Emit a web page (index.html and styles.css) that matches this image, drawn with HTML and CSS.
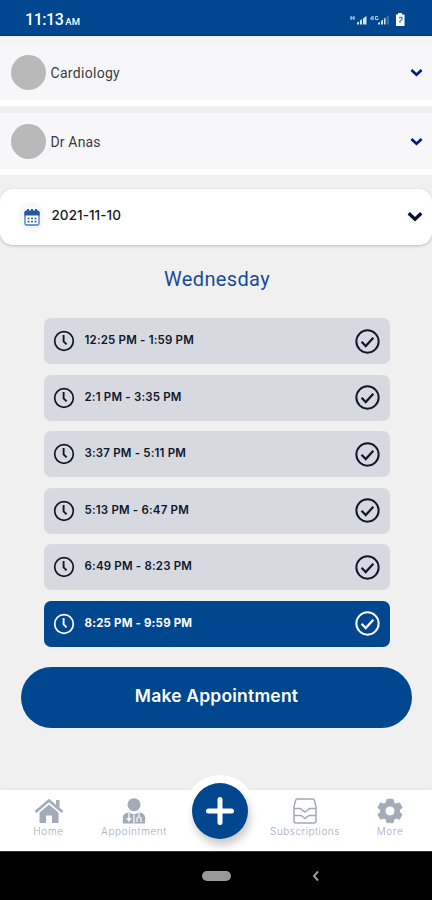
FILE: index.html
```
<!DOCTYPE html>
<html lang="en">
<head>
<meta charset="utf-8">
<title>Make Appointment</title>
<link rel="stylesheet" href="styles.css">
</head>
<body>
<svg class="defs" width="0" height="0">
  <symbol id="clock" viewBox="0 0 22 22"><g fill="none" stroke="currentColor" stroke-width="1.7"><circle cx="11" cy="11" r="9.3"/><path d="M10.6 5v6.4l3 3" stroke-width="1.9"/></g></symbol>
  <symbol id="check" viewBox="0 0 24 24"><g fill="none" stroke="currentColor" stroke-width="1.9"><circle cx="12" cy="12" r="10.700"/><path d="M6.3 12.2l4 4.2 7.3-8" stroke-width="2.1"/></g></symbol>
  <symbol id="down" viewBox="0 0 14 9"><path d="M1.5 1.7L7 6.8l5.500-5.100" fill="none" stroke="currentColor" stroke-width="2.9"/></symbol>
</svg>
<div class="phone">
  <header class="status">
    <div class="time">11:13<small>AM</small></div>
    <svg class="signals" width="56" height="16" viewBox="0 0 56 16" fill="#d5e2f1">
      <path d="M1 4v4M4 4v4M1 6h3" stroke="#d5e2f1" stroke-width="1"/>
      <path d="M7 12.500V10.500l2-1v3zM10 12.500V8.500l2-1.500v5.500zM13 12.500V6.500l3.500-2.500v8.500z"/>
      <path d="M22.500 4l-2 3h3M23 4v4M28 4.500h-2.500v3H28V6" fill="none" stroke="#b8cde5" stroke-width="1"/>
      <path d="M28 12.500V11l2-1v2.500zM31 12.500V9l2-1.500v5zM34 12.500V6.700l1.500-1.200v7z"/>
      <path d="M36.500 12.500V5l2.500-2v9.500z" opacity=".25"/>
      <path d="M46 2.500h2V1h4v1.500h2.500v11.500H46z" fill="#fff"/>
      <path d="M49 5.500h3v2l-2 1.500v2" fill="none" stroke="#527eb5" stroke-width="1.300"/>
    </svg>
  </header>
  <section class="picker first"><i class="avatar"></i><span class="cardio">Cardiology</span><svg class="arrow"><use href="#down"/></svg></section>
  <section class="picker"><i class="avatar"></i><span class="doctor">Dr Anas</span><svg class="arrow"><use href="#down"/></svg></section>
  <section class="date">
    <div class="cal"><svg width="16" height="17" viewBox="0 0 16 17"><rect x="1" y="3" width="14" height="13" rx="1.500" fill="#fff" stroke="#4878b5" stroke-width="1.300"/><path d="M.4 3q0-1.500 1.600-1.500H3V0h2v1.500h2V0h2v1.500h2V0h2v1.500h1q1.600 0 1.600 1.500v3.500H.4z" fill="#24589f"/><path d="M3.500 9.500h9M3.500 12.700h9" stroke="#3566a8" stroke-width="1.700" stroke-dasharray="2 1.500"/></svg></div>
    <span>2021-11-10</span><svg class="arrow"><use href="#down"/></svg>
  </section>
  <h1><span>Wednesday</span></h1>
  <main class="slots">
    <div class="slot"><svg class="clock"><use href="#clock"/></svg><span>12:25 PM - 1:59 PM</span><svg class="check"><use href="#check"/></svg></div>
    <div class="slot"><svg class="clock"><use href="#clock"/></svg><span>2:1 PM - 3:35 PM</span><svg class="check"><use href="#check"/></svg></div>
    <div class="slot"><svg class="clock"><use href="#clock"/></svg><span>3:37 PM - 5:11 PM</span><svg class="check"><use href="#check"/></svg></div>
    <div class="slot"><svg class="clock"><use href="#clock"/></svg><span>5:13 PM - 6:47 PM</span><svg class="check"><use href="#check"/></svg></div>
    <div class="slot"><svg class="clock"><use href="#clock"/></svg><span>6:49 PM - 8:23 PM</span><svg class="check"><use href="#check"/></svg></div>
    <div class="slot active"><svg class="clock"><use href="#clock"/></svg><span>8:25 PM - 9:59 PM</span><svg class="check"><use href="#check"/></svg></div>
  </main>
  <button class="make"><span>Make Appointment</span></button>
  <nav class="tabs">
    <div class="tab home"><svg width="30" height="26" viewBox="0 0 30 26"><path d="M1.500 14L15 2.500 28.500 14" fill="none" stroke="currentColor" stroke-width="2.700"/><path d="M22 2h3.500v8L22 7zM5.500 14.500L15 6.500l9.500 8V25H18v-7.500h-6V25H5.500z" fill="currentColor"/></svg><span>Home</span></div>
    <div class="tab appointment"><svg width="24" height="26" viewBox="0 0 24 26"><circle cx="12" cy="6.700" r="6.500" fill="currentColor"/><path d="M.8 25.500V20q0-5 6-5.500l5.200 2 5.200-2q6 .5 6 5.500v5.500z" fill="currentColor"/><path d="M7 15v3.500M12 17v8.500M17 15v3.500M15 24v-3q0-2 2-2t2 2v3" fill="none" stroke="#fff" stroke-width="1.200"/><path d="M7 18.500v5M4.500 21h5" stroke="#fff" stroke-width="1.700"/></svg><span>Appointment</span></div>
    <div class="tab fab-slot"><div class="halo"><div class="fab"><svg width="28" height="28" viewBox="0 0 28 28"><path d="M14 2.500v23M2.500 14h23" stroke="#fff" stroke-width="5" stroke-linecap="round"/></svg></div></div></div>
    <div class="tab subscriptions"><svg width="24" height="26" viewBox="0 0 24 26" fill="none" stroke="currentColor" stroke-width="1.500"><path d="M1 8.500L2.500 2.500q.4-1.500 2-1.500h15q1.600 0 2 1.500L23 8.500V23q0 2-2 2H3q-2 0-2-2zM1 10.500h6q1 0 1.500 1L12 14l3.500-2.500q.5-1 1.500-1h6M1 17.500h7l4 3 4-3h7"/></svg><span>Subscriptions</span></div>
    <div class="tab more"><svg width="26" height="26" viewBox="0 0 26 26"><path fill="currentColor" stroke="currentColor" stroke-linejoin="round" fill-rule="evenodd" d="M10 1.300h6l.8 3.500 2.200 1.300 3.400-1.300 2.700 4.800-2.800 2.500v1.900l2.800 2.500-2.700 4.800-3.400-1.300-2.200 1.300-.8 3.400h-6l-.8-3.400L7 20l-3.400 1.300-2.700-4.800L3.700 14v-1.900L.9 9.600l2.700-4.800L7 6.100l2.200-1.300zM13 8a5 5 0 1 0 0 10 5 5 0 0 0 0-10z"/></svg><span>More</span></div>
  </nav>
  <footer class="system"><i class="pill"></i><svg width="8" height="12" viewBox="0 0 8 12"><path d="M6 1.500L2 6l4 4.500" fill="none" stroke="#999" stroke-width="2"/></svg></footer>
</div>
</body>
</html>
```
FILE: styles.css
```
* { box-sizing: border-box; }
body { margin: 0; background: #f0f0f0; }
.defs { display: block; }
.phone { width: 432px; height: 900px; display: flex; flex-direction: column; overflow: hidden; background: #f0f0f0; font-family: Inter, sans-serif; }
.phone > * { flex-shrink: 0; }
span { white-space: nowrap; }
.status { height: 36px; background: #004790; border-bottom: 1px solid #003584; color: #fff; display: flex; justify-content: space-between; padding: 10.5px 26px 0 25px; }
.time { display: flex; align-items: baseline; gap: 2px; height: 17px; font: 500 16px/17px Roboto, sans-serif; letter-spacing: -.45px; }
.time small { font-size: 9.5px; line-height: 12px; letter-spacing: 0; }
.signals { margin-top: 1px; }
.picker { height: 62px; border-bottom: 6px solid #fff; background: #f7f7fa; display: flex; align-items: center; padding: 0 9px 0 11px; color: #3c3c40; font: 400 14px/20px Roboto, sans-serif; }
.picker.first { height: 70px; padding-top: 8px; margin-bottom: 7px; background: linear-gradient(#f2f2f3, #f7f7fa 12px); }
.avatar { width: 35px; height: 35px; border-radius: 50%; background: #b9b9b9; margin-right: 4.5px; }
.arrow { width: 13px; height: 9px; margin-left: auto; color: #001e82; }
.cardio { letter-spacing: .3px; padding-top: 2px; }
.doctor { letter-spacing: .15px; padding-top: 2px; }
.date { height: 56px; margin-top: 14px; border-radius: 13px; background: #fff; box-shadow: 0 1px 3px rgba(0,0,0,.22); display: flex; align-items: center; padding: 0 9px 0 18px; font-size: 13.5px; font-weight: 500; color: #17191f; }
.cal { width: 27px; height: 30px; border-radius: 50%; background: #f8f8fa; display: flex; align-items: center; justify-content: center; margin-right: 6.5px; }
.date span { letter-spacing: .05px; padding-bottom: 4px; }
.date .arrow { width: 16px; height: 11px; margin-bottom: 1px; color: #07142d; }
h1 { height: 73px; margin: 0; padding: 22px 0 0 2px; text-align: center; color: #194c99; font: 400 20px/24px Roboto, sans-serif; letter-spacing: .35px; }
.slots { display: flex; flex-direction: column; gap: 10.5px; width: 346px; margin-left: 43.5px; }
.slot { height: 46px; border-radius: 7px; background: #d6d9e0; color: #10172a; display: flex; align-items: center; padding: 0 10px 0 9.5px; font-size: 11.5px; font-weight: 600; letter-spacing: .18px; }
.slot span { padding-bottom: 2px; margin-left: 9.5px; }
.clock { width: 22px; height: 22px; }
.check { width: 25px; height: 25px; margin-left: auto; }
.active { background: #004790; color: #fff; font-weight: 700; }
.make { width: 391px; height: 61px; margin: 20.500px 0 0 21px; border: 0; border-radius: 31px; background: #004790; color: #fff; font: 600 17.5px/20px Inter, sans-serif; letter-spacing: .2px; padding: 0 0 4px; }
.tabs { height: 61px; margin-top: auto; background: #fff; display: grid; grid-template-columns: 97px 74px 98px 72px 98px; color: #a3abb8; box-shadow: 0 -1px 2px rgba(0,0,0,.06); }
.tab { display: flex; flex-direction: column; align-items: center; padding-top: 8px; font-size: 10px; font-weight: 300; line-height: 13px; letter-spacing: .6px; }
.tab svg { flex-shrink: 0; }
.tab span { margin-top: 1px; }
.subscriptions span { letter-spacing: .5px; }
.tab.fab-slot { align-self: start; padding: 0; }
.halo { width: 72px; height: 72px; margin-top: -15px; padding: 8px; border-radius: 50%; background: #fff; }
.fab { width: 56px; height: 56px; border-radius: 50%; background: #004790; display: flex; align-items: center; justify-content: center; box-shadow: 2px 6px 9px rgba(0,0,0,.22); }
.system { height: 49px; background: #000; border-top: 1px solid #333; display: flex; align-items: center; padding-left: 202px; }
.pill { width: 29px; height: 10px; border-radius: 5px; background: #999; margin-right: 81px; }
```
